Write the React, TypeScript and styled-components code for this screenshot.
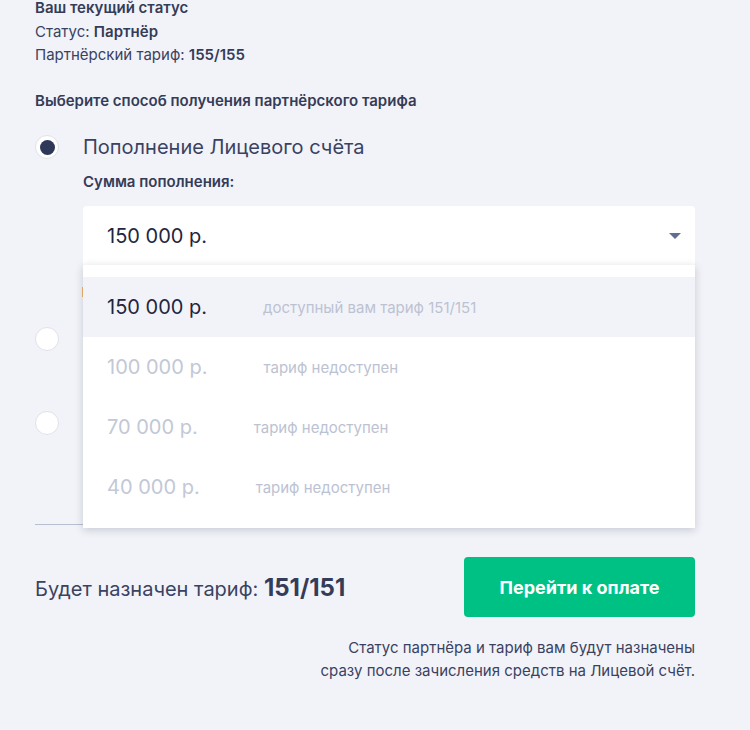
import React from "react";
import styled, { createGlobalStyle } from "styled-components";

const GlobalStyle = createGlobalStyle`
  html, body { margin: 0; padding: 0; background: #f2f3f8; }
  body { font-family: Inter, "Noto Sans", sans-serif; color: #3a4262; overflow: hidden; }
  * { box-sizing: border-box; }
`;

const Page = styled.div`
  width: 750px;
  height: 730px;
  padding: 0 55px 0 35px;
`;

const StatusBlock = styled.div`
  margin-top: -4px;
  font-size: 15px;
  line-height: 23.5px;
`;

const Strong = styled.b`
  font-weight: 600;
  color: #343c58;
`;

const SectionTitle = styled.div`
  margin-top: 22.5px;
  font-size: 15px;
  line-height: 24px;
  font-weight: 600;
  color: #343c58;
`;

const Option = styled.div<{ $mt: number }>`
  margin-top: ${(p) => p.$mt}px;
`;

const RadioRow = styled.div`
  display: flex;
  align-items: center;
  height: 28px;
  gap: 24px;
`;

const Radio = styled.span<{ $checked?: boolean }>`
  flex: none;
  width: 24px;
  height: 24px;
  border-radius: 50%;
  background: #fff;
  border: 1px solid #dfe2eb;
  display: flex;
  align-items: center;
  justify-content: center;
  &::after {
    content: "";
    width: 15px;
    height: 15px;
    border-radius: 50%;
    background: ${(p) => (p.$checked ? "#2e3859" : "transparent")};
  }
`;

const RadioLabel = styled.span`
  font-size: 20px;
  line-height: 28px;
  color: #3a4262;
`;

const OptionBody = styled.div`
  padding-left: 48px;
`;

const SubLabel = styled.div`
  margin-top: 11px;
  font-size: 15px;
  line-height: 20px;
  font-weight: 600;
  color: #343c58;
`;

const SelectWrap = styled.div`
  position: relative;
  margin-top: 14px;
`;

const SelectBox = styled.div`
  height: 60px;
  background: #fff;
  border-radius: 4px;
  display: flex;
  align-items: center;
  justify-content: space-between;
  padding: 0 14px 0 24px;
  font-size: 20px;
  color: #1f2640;
`;

const Arrow = styled.span`
  width: 0;
  height: 0;
  border-left: 6px solid transparent;
  border-right: 6px solid transparent;
  border-top: 6px solid #5f6f94;
`;

const Hint = styled.div`
  margin-top: 21px;
  margin-left: -1px;
  height: 10px;
  border-left: 1px solid #f0b36a;
`;

const Dropdown = styled.div`
  position: absolute;
  top: 59px;
  left: 0;
  right: 0;
  z-index: 5;
  background: #fff;
  padding: 12px 0 11px;
  box-shadow: 0 2px 8px rgba(40, 48, 80, 0.22);
`;

const Item = styled.div<{ $active?: boolean }>`
  height: 60px;
  display: flex;
  align-items: center;
  padding-left: 24px;
  background: ${(p) => (p.$active ? "#f2f3f8" : "#fff")};
`;

const ItemValue = styled.span<{ $disabled?: boolean }>`
  font-size: 20px;
  color: ${(p) => (p.$disabled ? "#c2c8d6" : "#1f2640")};
`;

const ItemDesc = styled.span`
  margin-left: 56px;
  font-size: 15px;
  color: #bcc2d2;
`;

const Divider = styled.div`
  margin-top: 87px;
  height: 1px;
  background: #b8bfd0;
`;

const Footer = styled.div`
  margin-top: 32px;
  display: flex;
  align-items: center;
  justify-content: space-between;
`;

const Result = styled.div`
  font-size: 20px;
  color: #3a4262;
`;

const ResultValue = styled.b`
  font-size: 24px;
  font-weight: 700;
  color: #343c58;
`;

const PayButton = styled.button`
  width: 231px;
  height: 60px;
  border: none;
  border-radius: 4px;
  background: #00c184;
  color: #fff;
  font-family: Inter, "Noto Sans", sans-serif;
  font-size: 18px;
  font-weight: 700;
`;

const Note = styled.div`
  margin-top: 19px;
  text-align: right;
  font-size: 15px;
  line-height: 23px;
  color: #3a4262;
`;

const items = [
  { value: "150 000 р.", desc: "доступный вам тариф 151/151", active: true },
  { value: "100 000 р.", desc: "тариф недоступен" },
  { value: "70 000 р.", desc: "тариф недоступен" },
  { value: "40 000 р.", desc: "тариф недоступен" },
];

export default function App() {
  return (
    <Page>
      <GlobalStyle />
      <StatusBlock>
        <Strong>Ваш текущий статус</Strong>
        <div>
          Статус: <Strong>Партнёр</Strong>
        </div>
        <div>
          Партнёрский тариф: <Strong>155/155</Strong>
        </div>
      </StatusBlock>
      <SectionTitle>Выберите способ получения партнёрского тарифа</SectionTitle>

      <Option $mt={20}>
        <RadioRow>
          <Radio $checked />
          <RadioLabel>Пополнение Лицевого счёта</RadioLabel>
        </RadioRow>
        <OptionBody>
          <SubLabel>Сумма пополнения:</SubLabel>
          <SelectWrap>
            <SelectBox>
              <span>150 000 р.</span>
              <Arrow />
            </SelectBox>
            <Dropdown>
              {items.map((it) => (
                <Item key={it.value} $active={it.active}>
                  <ItemValue $disabled={!it.active}>{it.value}</ItemValue>
                  <ItemDesc>{it.desc}</ItemDesc>
                </Item>
              ))}
            </Dropdown>
          </SelectWrap>
          <Hint />
        </OptionBody>
      </Option>

      <Option $mt={28}>
        <RadioRow>
          <Radio />
        </RadioRow>
      </Option>
      <Option $mt={56}>
        <RadioRow>
          <Radio />
        </RadioRow>
      </Option>

      <Divider />
      <Footer>
        <Result>
          Будет назначен тариф: <ResultValue>151/151</ResultValue>
        </Result>
        <PayButton>Перейти к оплате</PayButton>
      </Footer>
      <Note>
        Статус партнёра и тариф вам будут назначены
        <br />
        сразу после зачисления средств на Лицевой счёт.
      </Note>
    </Page>
  );
}
